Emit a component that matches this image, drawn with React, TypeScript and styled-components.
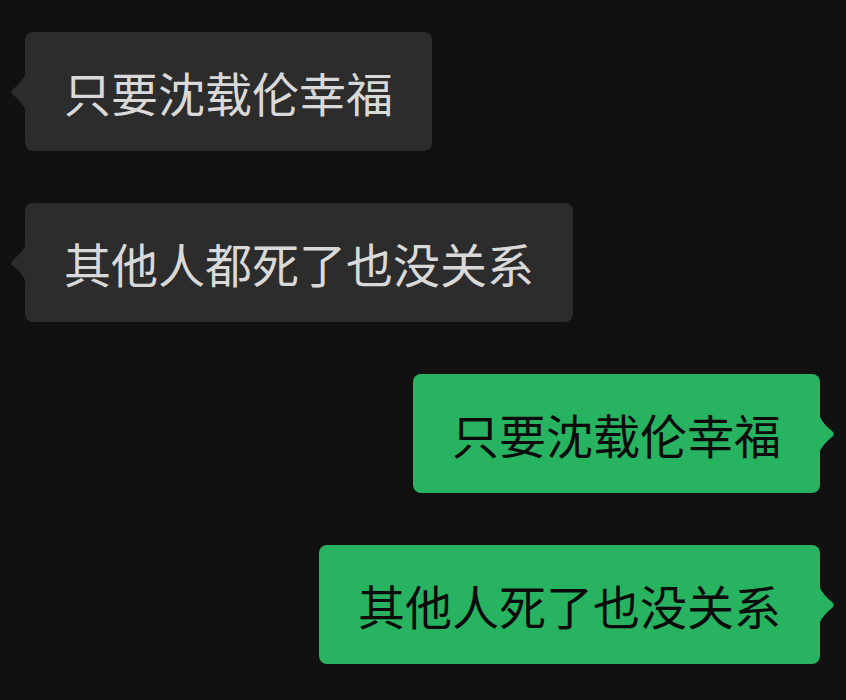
import React from "react";
import styled, { createGlobalStyle } from "styled-components";

const Global = createGlobalStyle`
  html, body { margin: 0; padding: 0; background: #111111; }
  body { font-family: "Noto Sans CJK SC", "Noto Sans", sans-serif; }
`;

const Chat = styled.div`
  width: 846px;
  height: 700px;
  box-sizing: border-box;
  padding: 32px 26px 0 25px;
  display: flex;
  flex-direction: column;
  gap: 52px;
  background: #111111;
  overflow: hidden;
`;

const Row = styled.div<{ $mine: boolean }>`
  display: flex;
  justify-content: ${(p) => (p.$mine ? "flex-end" : "flex-start")};
`;

const Bubble = styled.div<{ $mine: boolean }>`
  position: relative;
  height: 119px;
  box-sizing: border-box;
  padding: 0 39px;
  display: flex;
  align-items: center;
  border-radius: 8px;
  font-size: 47px;
  line-height: 47px;
  white-space: nowrap;
  background: ${(p) => (p.$mine ? "#27b35f" : "#2c2c2c")};
  color: ${(p) => (p.$mine ? "#0b0b0b" : "#d9d9d9")};
`;

const Tail = styled.svg<{ $mine: boolean }>`
  position: absolute;
  top: 50%;
  width: 16px;
  height: 38px;
  margin-top: -19px;
  ${(p) => (p.$mine ? "right: -15px;" : "left: -15px; transform: scaleX(-1);")}
  fill: ${(p) => (p.$mine ? "#27b35f" : "#2c2c2c")};
`;

const msgs = [
  { text: "只要沈载伦幸福", mine: false },
  { text: "其他人都死了也没关系", mine: false },
  { text: "只要沈载伦幸福", mine: true },
  { text: "其他人死了也没关系", mine: true },
];

export default function App() {
  return (
    <>
      <Global />
      <Chat>
        {msgs.map((m, i) => (
          <Row key={i} $mine={m.mine}>
            <Bubble $mine={m.mine}>
              <Tail $mine={m.mine} viewBox="0 0 16 38">
                <path d="M0 0 C3 7 8 12 13.5 16.5 Q16 19 13.5 21.5 C8 26 3 31 0 38 Z" />
              </Tail>
              {m.text}
            </Bubble>
          </Row>
        ))}
      </Chat>
    </>
  );
}
